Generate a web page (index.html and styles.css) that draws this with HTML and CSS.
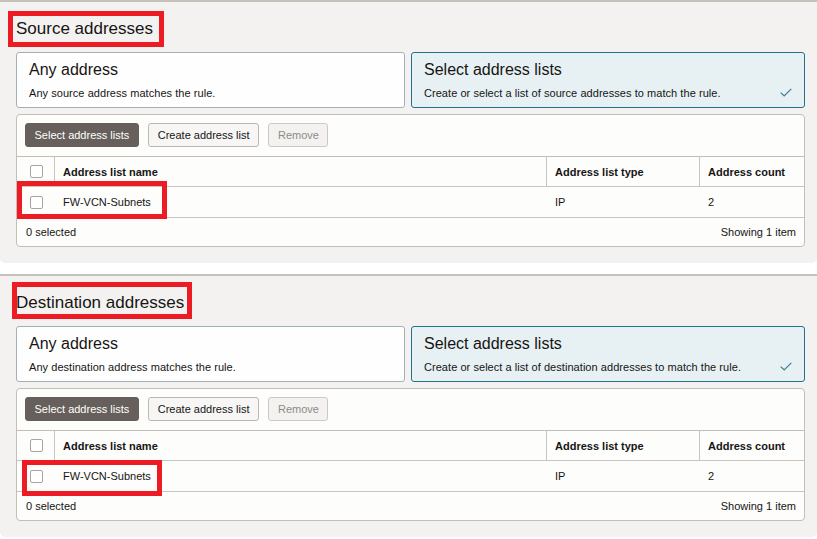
FILE: index.html
```html
<!DOCTYPE html>
<html>
<head>
<meta charset="utf-8">
<link rel="stylesheet" href="styles.css">
</head>
<body>
<section class="section">
  <h2 class="heading">Source addresses<span class="mark mark-h1"></span></h2>
  <div class="cards">
    <div class="card">
      <div class="card-title">Any address</div>
      <div class="card-desc"><span>Any source address matches the rule.</span></div>
    </div>
    <div class="card selected">
      <div class="card-title">Select address lists</div>
      <div class="card-desc"><span>Create or select a list of source addresses to match the rule.</span>
        <svg class="check" width="12" height="9" viewBox="0 0 12 9"><path d="M0.7 4.6 L4.2 8 L11.3 0.8" fill="none" stroke="#3a7d98" stroke-width="1.2"/></svg>
      </div>
    </div>
  </div>
  <div class="panel">
    <div class="toolbar">
      <button class="btn primary">Select address lists</button>
      <button class="btn">Create address list</button>
      <button class="btn disabled">Remove</button>
    </div>
    <div class="row head">
      <div class="cell chk"><span class="box"></span></div>
      <div class="cell">Address list name</div>
      <div class="cell">Address list type</div>
      <div class="cell last">Address count</div>
    </div>
    <div class="row data">
      <div class="cell chk"><span class="box"></span></div>
      <div class="cell">FW-VCN-Subnets</div>
      <div class="cell">IP</div>
      <div class="cell last">2</div>
      <span class="mark mark-r1"></span>
    </div>
    <div class="footer">
      <span>0 selected</span>
      <span>Showing 1 item</span>
    </div>
  </div>
</section>

<section class="section second">
  <h2 class="heading">Destination addresses<span class="mark mark-h2"></span></h2>
  <div class="cards">
    <div class="card">
      <div class="card-title">Any address</div>
      <div class="card-desc"><span>Any destination address matches the rule.</span></div>
    </div>
    <div class="card selected">
      <div class="card-title">Select address lists</div>
      <div class="card-desc"><span>Create or select a list of destination addresses to match the rule.</span>
        <svg class="check" width="12" height="9" viewBox="0 0 12 9"><path d="M0.7 4.6 L4.2 8 L11.3 0.8" fill="none" stroke="#3a7d98" stroke-width="1.2"/></svg>
      </div>
    </div>
  </div>
  <div class="panel">
    <div class="toolbar">
      <button class="btn primary">Select address lists</button>
      <button class="btn">Create address list</button>
      <button class="btn disabled">Remove</button>
    </div>
    <div class="row head">
      <div class="cell chk"><span class="box"></span></div>
      <div class="cell">Address list name</div>
      <div class="cell">Address list type</div>
      <div class="cell last">Address count</div>
    </div>
    <div class="row data">
      <div class="cell chk"><span class="box"></span></div>
      <div class="cell">FW-VCN-Subnets</div>
      <div class="cell">IP</div>
      <div class="cell last">2</div>
      <span class="mark mark-r2"></span>
    </div>
    <div class="footer">
      <span>0 selected</span>
      <span>Showing 1 item</span>
    </div>
  </div>
</section>
</body>
</html>
```

FILE: styles.css
```css
* { box-sizing: border-box; }
html, body { margin: 0; padding: 0; background: #ffffff; }
body {
  font-family: "Liberation Sans", Arial, sans-serif;
  color: #161513;
  font-size: 11px;
  width: 817px;
  height: 539px;
  overflow: hidden;
}
.section {
  background: #f3f2f0;
  border-top: 2px solid #c6c1bb;
  border-radius: 0 0 5px 5px;
  padding: 15px 12px 16px 16px;
}
.section.second { margin-top: 11px; }
.heading {
  position: relative;
  margin: 0 0 15px 0;
  font-size: 17px;
  line-height: 21px;
  padding-top: 1px;
  height: 20px;
  font-weight: normal;
}
.mark {
  position: absolute;
  border: 5px solid #ed1c24;
  pointer-events: none;
}
.mark-h1 { left: -8px; top: -6px; width: 156px; height: 36px; }
.mark-h2 { left: -4px; top: -9px; width: 180px; height: 37px; }
.mark-r1 { left: 0; top: -6px; width: 150px; height: 38px; }
.mark-r2 { left: 5px; top: -1px; width: 140px; height: 36px; }

.cards {
  display: grid;
  grid-template-columns: 389fr 394fr;
  gap: 6px;
  margin-bottom: 6px;
}
.card {
  background: #fefefe;
  border: 1px solid #a4b0b8;
  border-radius: 3px;
  padding: 7px 12px 7px 12px;
  height: 56px;
}
.card.selected {
  background: #e7f1f4;
  border-color: #23718f;
}
.card-title {
  font-size: 16px;
  line-height: 20px;
  margin-bottom: 6px;
}
.card-desc {
  display: flex;
  justify-content: space-between;
  align-items: center;
  font-size: 11px;
  line-height: 14px;
  letter-spacing: 0.05px;
}
.check { margin-right: 0; margin-top: -1px; }

.panel {
  background: #fdfdfc;
  border: 1px solid #c3beb8;
  border-radius: 4px;
}
.toolbar {
  display: flex;
  gap: 9px;
  padding: 8px 8px 9px 8px;
  border-bottom: 1px solid #c3beb8;
}
.btn {
  font-family: "Liberation Sans", Arial, sans-serif;
  font-size: 11px;
  height: 24px;
  padding: 0 9px;
  border: 1px solid #bdb7b1;
  border-radius: 3px;
  background: #f7f6f5;
  color: #161513;
}
.btn.primary {
  background: #665f5b;
  border-color: #665f5b;
  color: #ffffff;
  padding: 0 8.5px;
}
.btn.disabled {
  background: #f3f2f1;
  border-color: #cdc8c3;
  color: #8f8a86;
  padding: 0 8.5px;
}
.row {
  position: relative;
  display: grid;
  grid-template-columns: 38px 492px 153px 1fr;
  border-bottom: 1px solid #c9c4bf;
}
.row.head { height: 30px; font-weight: bold; }
.row.data { height: 31px; }
.cell {
  display: flex;
  align-items: center;
  padding-left: 8px;
}
.row.head .cell { border-right: 1px solid #c9c4bf; }
.row.head .cell.last { border-right: none; }
.cell.chk { justify-content: center; padding-left: 0; }
.box {
  width: 13px;
  height: 13px;
  border: 1px solid #aaa49f;
  border-radius: 2px;
  background: #ffffff;
}
.row.head .cell.chk .box { margin-left: 1px; }
.footer {
  display: flex;
  justify-content: space-between;
  align-items: center;
  height: 28px;
  padding: 0 8px 0 9px;
}
```
